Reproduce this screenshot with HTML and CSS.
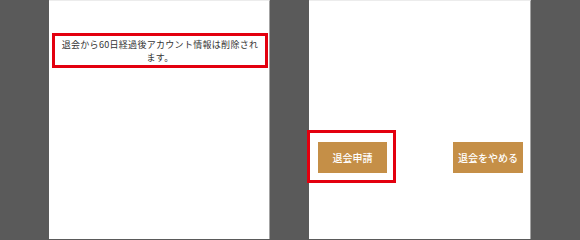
FILE: index.html
```html
<!DOCTYPE html>
<html lang="ja">
<head>
<meta charset="utf-8">
<link rel="stylesheet" href="styles.css">
</head>
<body>
  <div class="panel panel-notice">
    <div class="highlight notice">退会から60日経過後アカウント情報は削除され<br>ます。</div>
  </div>
  <div class="panel panel-actions">
    <div class="highlight apply-wrap">
      <button class="btn">退会申請</button>
    </div>
    <button class="btn btn-cancel">退会をやめる</button>
  </div>
</body>
</html>
```
FILE: styles.css
```css
html, body {
  margin: 0;
  padding: 0;
}
body {
  width: 580px;
  height: 239px;
  overflow: hidden;
  background: #5a5a5a;
  display: flex;
  gap: 39px;
  padding-left: 49px;
  box-sizing: border-box;
  font-family: "Noto Sans CJK JP", "Noto Sans", sans-serif;
}
.panel {
  height: 239px;
  background: #fff;
  box-sizing: border-box;
  border-right: 1px solid #a3a3a3;
  border-top: 1px solid #ececec;
}
.panel-notice {
  width: 221px;
  padding: 32px 0 0 3px;
}
.highlight {
  border: 3px solid #e3000f;
  box-sizing: border-box;
}
.notice {
  width: 216px;
  height: 35px;
  padding: 2px 0 0;
  font-size: 9px;
  letter-spacing: 0.3px;
  line-height: 13px;
  color: #333;
  text-align: center;
  white-space: nowrap;
}
.panel-actions {
  width: 222px;
  padding: 129px 7px 0 0;
  display: flex;
  align-items: flex-start;
  justify-content: space-between;
}
.apply-wrap {
  margin-left: -2px;
  width: 89px;
  height: 53px;
  padding: 9px 0 0 8px;
  background: #fff;
}
.btn {
  width: 69px;
  height: 31px;
  margin: 0;
  padding: 0;
  border: none;
  background: #c58f47;
  color: #fff;
  font-family: "Noto Sans CJK JP", sans-serif;
  font-size: 10px;
  font-weight: 500;
  display: block;
}
.btn-cancel {
  width: 70px;
  margin-top: 12px;
}
```
